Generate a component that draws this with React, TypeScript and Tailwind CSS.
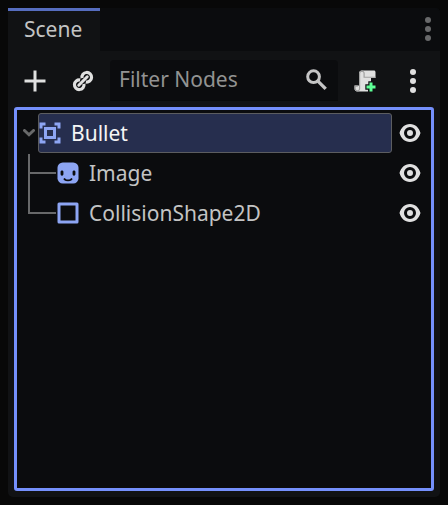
import type { ReactNode } from 'react';

function Icon({ children, className = '' }: { children: ReactNode; className?: string }) {
  return (
    <svg viewBox="0 0 16 16" className={`h-6 w-6 shrink-0 ${className}`} fill="currentColor">
      {children}
    </svg>
  );
}

function Dots() {
  return (
    <Icon>
      <circle cx="8" cy="2" r="2" />
      <circle cx="8" cy="8" r="2" />
      <circle cx="8" cy="14" r="2" />
    </Icon>
  );
}

function LinkIcon() {
  return (
    <Icon>
      <g fill="none" stroke="currentColor" strokeWidth="2.1" transform="rotate(-45 8 8)">
        <path d="M8.9 6.2A3.2 3.2 0 1 1 8.9 9.8M7.1 9.8A3.2 3.2 0 1 1 7.1 6.2" />
        <path d="M4 8h8" strokeLinecap="round" strokeWidth="2" />
      </g>
    </Icon>
  );
}

function ScriptIcon() {
  return (
    <Icon>
      <path d="M6 1a2 2 0 0 0-2 2v8H1v2a2 2 0 0 0 2 2h7v-3h2V6h3V3a2 2 0 0 0-.6-2z" />
      <path d="M6 1.4A1.6 1.6 0 0 0 4.4 3v10A1.5 1.5 0 0 1 3 14.6 1.6 1.6 0 0 1 1.4 13v-1.6h1.8M6 1.4A1.5 1.5 0 0 1 7.4 3v2.5H15" fill="none" stroke="#a0a0a0" strokeWidth=".8" />
      <path d="M11 9h2v2h2v2h-2v2h-2v-2H9v-2h2z" fill="#5fff97" stroke="#111214" strokeWidth="1.6" paintOrder="stroke" />
    </Icon>
  );
}

function Eye() {
  return (
    <Icon className="text-[#e0e0e0]">
      <path fillRule="evenodd" d="M8 2C4.4 2 1.9 4.6 1 8c.9 3.4 3.4 6 7 6s6.1-2.6 7-6c-.9-3.4-3.4-6-7-6zm0 2a4 4 0 1 1 0 8 4 4 0 0 1 0-8zm0 2a2 2 0 1 0 0 4 2 2 0 0 0 0-4z" />
    </Icon>
  );
}

function AreaIcon() {
  return (
    <Icon className="text-[#8da5f3]">
      <path fillRule="evenodd" d="M1 1v4h2V3h2V1zm10 0v2h2v2h2V1zM4 4v8h8V4zm2 2h4v4H6zm-5 5v4h4v-2H3v-2zm12 0v2h-2v2h4v-4z" />
    </Icon>
  );
}

function SpriteIcon() {
  return (
    <Icon className="text-[#8da5f3]">
      <rect x="1" y="1" width="14" height="14" rx="3.5" />
      <g stroke="#0b0c0e" fill="none" strokeLinecap="round">
        <path d="M4 7.2v1.6M12 7.2v1.6" strokeWidth="1.9" />
        <path d="M5.7 12.1c1.3 1.1 3.3 1.1 4.6 0" strokeWidth="1.3" />
      </g>
    </Icon>
  );
}

function ShapeIcon() {
  return (
    <Icon className="text-[#8da5f3]">
      <path d="M2 2h12v12H2z" fill="none" stroke="currentColor" strokeWidth="2" strokeLinejoin="round" />
    </Icon>
  );
}

function Child({ icon, name }: { icon: ReactNode; name: string }) {
  return (
    <div className="flex h-10 items-center">
      {icon}
      <span className="ml-[9px] flex-1 text-[#c3c4c4]">{name}</span>
      <Eye />
    </div>
  );
}

export default function App() {
  return (
    <div className="h-[505px] w-[448px] bg-[#080808] p-2 font-['Noto_Sans',sans-serif] text-[21px] leading-[30px]">
      <div className="flex h-[489px] w-[432px] flex-col overflow-hidden rounded-b-[5px] rounded-tr-[5px] bg-[#111214]">
        <header className="flex h-[43px] shrink-0 justify-between bg-[#0b0c0e]">
          <div className="w-[92px] border-t-[3px] border-[#566dbf] bg-[#111214] pl-4 pt-[3px] text-[#c3c4c4]">Scene</div>
          <div className="pt-[9px] text-[#68696a]"><Dots /></div>
        </header>
        <div className="flex h-[56px] shrink-0 items-center pt-[3px] text-[#e0e0e0]">
          <Icon className="ml-[15px]"><path d="M7 1v6H1v2h6v6h2V9h6V7H9V1z" /></Icon>
          <div className="ml-6"><LinkIcon /></div>
          <div className="ml-[15px] flex h-[41px] w-[228px] items-center justify-between rounded-t-[4px] border-b border-[#090a0a] bg-[#0b0c0e] pl-[9px] pr-[9px] text-[#929392]">
            <span className="-mt-0.5">Filter Nodes</span>
            <Icon className="text-[#c5c5c5]">
              <circle cx="5.7" cy="5.8" r="3.9" fill="none" stroke="currentColor" strokeWidth="2" />
              <path d="m8.6 8.7 5.2 5.2" stroke="currentColor" strokeWidth="2.2" />
            </Icon>
          </div>
          <div className="ml-[15px]"><ScriptIcon /></div>
          <div className="ml-6"><Dots /></div>
        </div>
        <main className="ml-1.5 h-[384px] w-[420px] rounded-[3px] border-[3px] border-[#7590fc] bg-[#0b0c0e] pt-[3px]">
          <div className="flex h-10 items-center">
            <svg viewBox="0 0 12 8" className="ml-[6px] h-2 w-3 shrink-0" fill="none" stroke="#68696a" strokeWidth="3">
              <path d="m1.5 1.5 4.5 4.3 4.5-4.3" strokeLinecap="round" />
            </svg>
            <div className="ml-[3px] flex h-10 w-[354px] items-center rounded-[3px] border border-[#5c5d60] bg-[#262e4e] text-[#f5f5f5]">
              <div className="-ml-px"><AreaIcon /></div>
              <span className="ml-[9px]">Bullet</span>
            </div>
            <div className="ml-[6px]"><Eye /></div>
          </div>
          <div className="flex pr-[9px]">
            <svg className="ml-[11px] h-20 w-7 shrink-0" viewBox="0 0 28 80" fill="none" stroke="#68696a" strokeWidth="2">
              <path d="M1 1v59h27M1 20h27" />
            </svg>
            <div className="flex-1">
              <Child icon={<SpriteIcon />} name="Image" />
              <Child icon={<ShapeIcon />} name="CollisionShape2D" />
            </div>
          </div>
        </main>
      </div>
    </div>
  );
}
